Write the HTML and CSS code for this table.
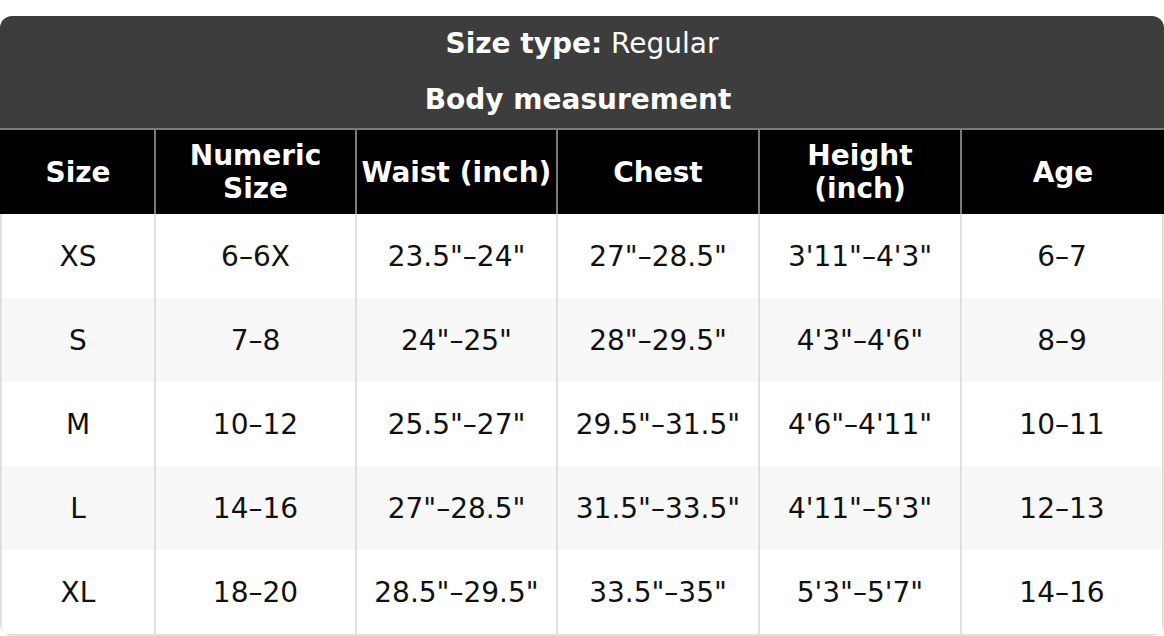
FILE: index.html
```html
<!DOCTYPE html>
<html lang="en">
<head>
<meta charset="utf-8">
<title>Size chart</title>
<link rel="stylesheet" href="styles.css">
</head>
<body>
<div class="chart">
  <div class="caption">
    <div class="caption-line"><strong>Size type:</strong> Regular</div>
    <div class="caption-line caption-sub"><strong>Body measurement</strong></div>
  </div>
  <table class="table">
    <colgroup>
      <col class="c1"><col class="c2"><col class="c3"><col class="c4"><col class="c5"><col class="c6">
    </colgroup>
    <thead>
      <tr>
        <th>Size</th>
        <th>Numeric<br>Size</th>
        <th>Waist (inch)</th>
        <th>Chest</th>
        <th>Height<br>(inch)</th>
        <th>Age</th>
      </tr>
    </thead>
    <tbody>
      <tr><td>XS</td><td>6–6X</td><td>23.5"–24"</td><td>27"–28.5"</td><td>3'11"–4'3"</td><td>6–7</td></tr>
      <tr><td>S</td><td>7–8</td><td>24"–25"</td><td>28"–29.5"</td><td>4'3"–4'6"</td><td>8–9</td></tr>
      <tr><td>M</td><td>10–12</td><td>25.5"–27"</td><td>29.5"–31.5"</td><td>4'6"–4'11"</td><td>10–11</td></tr>
      <tr><td>L</td><td>14–16</td><td>27"–28.5"</td><td>31.5"–33.5"</td><td>4'11"–5'3"</td><td>12–13</td></tr>
      <tr><td>XL</td><td>18–20</td><td>28.5"–29.5"</td><td>33.5"–35"</td><td>5'3"–5'7"</td><td>14–16</td></tr>
    </tbody>
  </table>
</div>
</body>
</html>
```

FILE: styles.css
```css
html, body {
  margin: 0;
  padding: 0;
  background: #ffffff;
}
body {
  padding-top: 16px;
  font-family: "DejaVu Sans", sans-serif;
  font-size: 28px;
}
.chart {
  width: 1164px;
  border-radius: 12px;
  overflow: hidden;
  background: #ffffff;
}
.caption {
  background: #3d3d3d;
  color: #ffffff;
  text-align: center;
  height: 114px;
  box-sizing: border-box;
  padding-top: 11px;
  display: flex;
  flex-direction: column;
  gap: 23px;
  border-bottom: 2px solid #7a7a7a;
}
.caption-line {
  line-height: 33px;
  font-weight: normal;
}
.caption-sub {
  padding-right: 8px;
}
.caption-line strong {
  font-weight: bold;
}
.table {
  width: 1164px;
  border-collapse: separate;
  border-spacing: 0;
  table-layout: fixed;
}
.c1 { width: 154px; }
.c2 { width: 201px; }
.c3 { width: 201px; }
.c4 { width: 202px; }
.c5 { width: 202px; }
.c6 { width: 204px; }
.table th,
.table td {
  line-height: 33px;
  height: 84px;
  padding: 0 2px;
  box-sizing: border-box;
  text-align: center;
  vertical-align: middle;
  white-space: nowrap;
}
.table th {
  background: #000000;
  color: #ffffff;
  font-weight: bold;
  border-left: 2px solid #7a7a7a;
}
.table th:first-child {
  border-left: 2px solid #000000;
}
.table td {
  color: #111111;
  border-left: 2px solid #e0e0e0;
}
.table td:last-child {
  border-right: 2px solid #e0e0e0;
}
.table tbody tr:last-child td {
  height: 86px;
  border-bottom: 2px solid #e0e0e0;
}
.table tbody tr:nth-child(even) td {
  background: #f8f8f8;
}
```
